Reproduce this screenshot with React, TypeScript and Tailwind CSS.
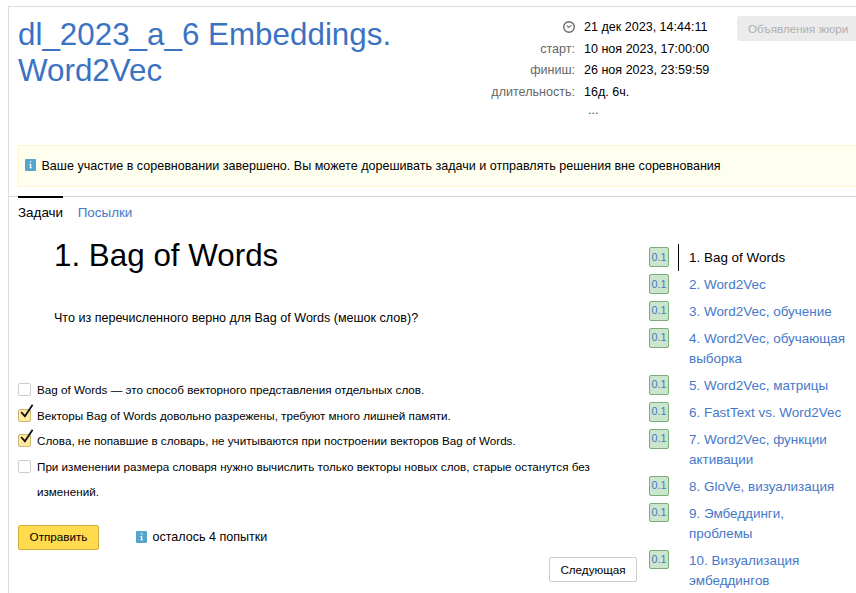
import React from "react";

const problems: { title: string; height: string; badge: string }[] = [
  { title: "1. Bag of Words", height: "h-[27px]", badge: "h-5 leading-[18px]" },
  { title: "2. Word2Vec", height: "h-[27px]", badge: "h-5 leading-[18px]" },
  { title: "3. Word2Vec, обучение", height: "h-[27px]", badge: "h-5 leading-4" },
  { title: "4. Word2Vec, обучающая выборка", height: "h-[47px]", badge: "h-5 leading-4" },
  { title: "5. Word2Vec, матрицы", height: "h-[27px]", badge: "h-5 leading-4" },
  { title: "6. FastText vs. Word2Vec", height: "h-[27px]", badge: "h-5 leading-4" },
  { title: "7. Word2Vec, функции активации", height: "h-[47px]", badge: "h-5 leading-4" },
  { title: "8. GloVe, визуализация", height: "h-[27px]", badge: "h-5 leading-4" },
  { title: "9. Эмбеддинги, проблемы", height: "h-[47px]", badge: "h-[19px] leading-4" },
  { title: "10. Визуализация эмбеддингов", height: "h-[47px]", badge: "h-[19px] leading-4" },
];

const answers: { text: string; checked: boolean; height: string }[] = [
  { text: "Bag of Words — это способ векторного представления отдельных слов.", checked: false, height: "h-[26px]" },
  { text: "Векторы Bag of Words довольно разрежены, требуют много лишней памяти.", checked: true, height: "h-[25px]" },
  { text: "Слова, не попавшие в словарь, не учитываются при построении векторов Bag of Words.", checked: true, height: "h-[26px]" },
  { text: "При изменении размера словаря нужно вычислить только векторы новых слов, старые останутся без изменений.", checked: false, height: "h-[51px]" },
];

const times: [string, string][] = [
  ["старт:", "10 ноя 2023, 17:00:00"],
  ["финиш:", "26 ноя 2023, 23:59:59"],
  ["длительность:", "16д. 6ч."],
];

function InfoIcon() {
  return (
    <svg className="mb-px h-3 w-[11px] shrink-0" viewBox="0 0 11 12">
      <rect width="11" height="12" rx="1" fill="#56a5cd" />
      <path d="M4.9 2.3h1.4v1.2H4.9zM4.1 4.9h2.1v3.6H7v.8H4.1v-.8H5V5.7h-.9z" fill="#fff" />
    </svg>
  );
}

function ClockIcon() {
  return (
    <svg className="mb-px h-3 w-3" viewBox="0 0 12 12" fill="none" stroke="#666b70">
      <circle cx="6" cy="6" r="5.3" strokeWidth="1.4" />
      <path d="M3.7 4.6 5.6 6.3 8.6 4.4" strokeWidth="1.1" />
    </svg>
  );
}

function Checkbox({ checked }: { checked: boolean }) {
  return (
    <span
      className={
        checked
          ? "relative mt-[6px] h-[12.5px] w-[13px] shrink-0 rounded-[2px] border border-[#ccb778] bg-[#ffeba0]"
          : "mt-[6px] h-[12.5px] w-[13px] shrink-0 rounded-[2px] border border-[#ccc] bg-white"
      }
    >
      {checked && (
        <svg className="absolute -top-[5px] left-[1px] h-[14px] w-[14px] overflow-visible" viewBox="0 0 14 14" fill="none">
          <path d="M1.1 7 4.9 11.2 12.6 -.3" stroke="#111" strokeWidth="1.8" />
        </svg>
      )}
    </span>
  );
}

export default function App() {
  return (
    <div className="h-[593px] w-[856px] overflow-hidden bg-white pt-[6px] pl-2 font-['Liberation_Sans',Arial,sans-serif] text-black">
      <div className="h-[587px] border-t border-l border-[#ddd]">
        <header className="flex h-[138px] pt-[9px] pl-[9px]">
          <h1 className="w-[460px] shrink-0 pt-px pr-12 text-[31.36px] leading-9 text-[#3c72c2]">dl_2023_a_6 Embeddings. Word2Vec</h1>
          <div className="w-[259px] shrink-0 pt-px text-[12.55px] leading-[21.5px]">
            <div className="flex">
              <span className="flex w-[97px] items-center justify-end"><ClockIcon /></span>
              <span className="ml-[9px]">21 дек 2023, 14:44:11</span>
            </div>
            {times.map(([label, value]) => (
              <div className="flex" key={label}>
                <span className="w-[97px] text-right text-[#666]">{label}</span>
                <span className="ml-[9px]">{value}</span>
              </div>
            ))}
            <div className="-mt-[3px] pl-[110px] text-[#3b4a66]">...</div>
          </div>
          <button className="h-[25px] w-[130px] shrink-0 rounded-[3px] bg-[#ebebeb] pl-[11px] text-left text-[11.66px] leading-[26px] text-[#b0b0b0]">
            Объявления жюри
          </button>
        </header>

        <div className="ml-[9px] flex h-[42px] items-center border border-r-0 border-[#fcf3cf] bg-[#fffff0] pb-px pl-[6px] text-[12.55px]">
          <InfoIcon />
          <span className="ml-[5.5px] pt-[2px]">Ваше участие в соревновании завершено. Вы можете дорешивать задачи и отправлять решения вне соревнования</span>
        </div>

        <nav className="mt-[9px] flex h-[34px] border-t border-[#d5d5d5] pl-[9px] text-[13.44px] leading-[30px]">
          <span className="-mt-px h-8 border-t-2 border-black">Задачи</span>
          <a className="ml-[14.5px] pt-px text-[#4678c8]">Посылки</a>
        </nav>

        <div className="flex pl-[9px]">
          <main className="w-[619px] shrink-0">
            <h2 className="pt-2 pl-9 text-[31.36px] leading-9">1. Bag of Words</h2>
            <p className="mt-[34px] pl-9 text-[12.55px] leading-5">Что из перечисленного верно для Bag of Words (мешок слов)?</p>
            <div className="mt-[49px]">
              {answers.map((a) => (
                <label className={`flex ${a.height}`} key={a.text}>
                  <Checkbox checked={a.checked} />
                  <span className="ml-[6px] w-[580px] text-[11.66px] leading-[25.3px]">{a.text}</span>
                </label>
              ))}
            </div>
            <div className="mt-5 flex">
              <button className="h-[25px] w-[81px] rounded-[2px] border border-[#ccad3d] bg-[#ffdb4d] pb-[2px] text-[11.66px] leading-[21px]">Отправить</button>
              <div className="ml-[37px] flex h-6 items-center text-[12.55px]">
                <InfoIcon />
                <span className="ml-[5.5px] pt-px">осталось 4 попытки</span>
              </div>
            </div>
            <div className="mt-[7px] flex justify-end">
              <button className="h-[25px] w-[88px] rounded-[2px] border border-[#ccc] bg-white text-[11.66px] leading-[23px]">Следующая</button>
            </div>
          </main>
          <aside className="ml-3 pt-[14px]">
            {problems.map((p, i) => (
              <div className={`flex ${p.height}`} key={p.title}>
                <span className={`mt-[3px] w-5 shrink-0 rounded-[2px] border border-[#7bad78] bg-[#cce5cd] text-center text-[10.75px] text-[#4678c8] ${p.badge}`}>0.1</span>
                <a
                  className={
                    i === 0
                      ? "ml-[9px] w-[172px] border-l border-black pt-1 pl-[10px] text-[13.44px] leading-5"
                      : "ml-[9px] w-[172px] border-l border-transparent pt-1 pl-[10px] text-[13.44px] leading-5 text-[#4678c8]"
                  }
                >
                  {p.title}
                </a>
              </div>
            ))}
          </aside>
        </div>
      </div>
    </div>
  );
}
